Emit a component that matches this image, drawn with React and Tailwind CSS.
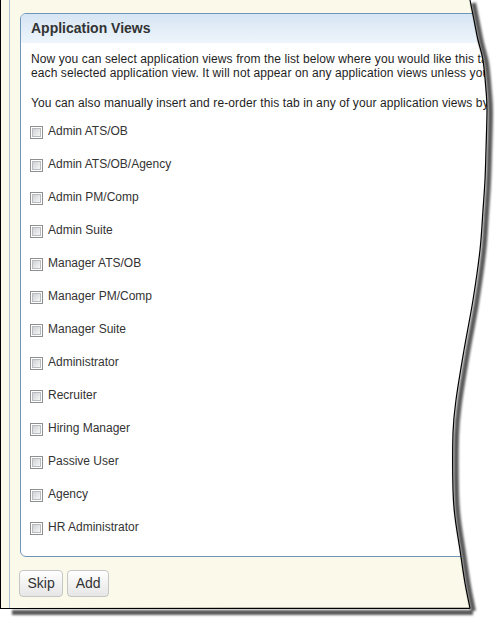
import React from "react";

const views = [
  "Admin ATS/OB",
  "Admin ATS/OB/Agency",
  "Admin PM/Comp",
  "Admin Suite",
  "Manager ATS/OB",
  "Manager PM/Comp",
  "Manager Suite",
  "Administrator",
  "Recruiter",
  "Hiring Manager",
  "Passive User",
  "Agency",
  "HR Administrator",
];

// torn right edge of the screenshot
const edge = [
  [470, 0], [472, 10], [474, 20], [478, 40], [483, 60], [486, 90], [487, 110],
  [486, 150], [485, 180], [483, 210], [480, 250], [473, 300], [464, 350],
  [456, 400], [453, 433], [453, 490], [455, 517], [460, 550], [465, 583], [470, 608],
];

const curve = (p) => {
  let d = "";
  for (let i = 0; i < p.length - 1; i++) {
    const p0 = p[i - 1] || p[i];
    const p1 = p[i];
    const p2 = p[i + 1];
    const p3 = p[i + 2] || p2;
    const c1 = [p1[0] + (p2[0] - p0[0]) / 6, p1[1] + (p2[1] - p0[1]) / 6];
    const c2 = [p2[0] - (p3[0] - p1[0]) / 6, p2[1] - (p3[1] - p1[1]) / 6];
    d += ` C${c1} ${c2} ${p2}`;
  }
  return d;
};

const shifted = edge.map(([x, y]) => [x + 3.5, y + 3]);

const TornEdge = () => (
  <svg
    className="absolute inset-0 pointer-events-none"
    width="504"
    height="626"
    viewBox="0 0 504 626"
  >
    <defs>
      <filter id="blur" x="-10%" y="-10%" width="120%" height="120%">
        <feGaussianBlur stdDeviation="1" />
      </filter>
    </defs>
    <path
      d={`M504,-2 L470,-2 L470,0${curve(edge)} L470,626 L504,626 Z`}
      fill="#ffffff"
    />
    <path
      d={`M12,612.5 L473,612.5 M473.5,3${curve(shifted)}`}
      fill="none"
      stroke="#5a5a5a"
      strokeWidth="5"
      filter="url(#blur)"
    />
    <path
      d={`M470,0${curve(edge)} L0,608.5`}
      fill="none"
      stroke="#000"
      strokeWidth="1.2"
    />
  </svg>
);

const Checkbox = () => (
  <span className="mt-[10px] w-[13px] h-[13px] shrink-0 border border-[#8e8f8f] bg-white p-px">
    <span className="block w-full h-full border border-[#b8bcc0] bg-gradient-to-br from-[#cfd1d4] to-[#f7f7f7]" />
  </span>
);

export default function App() {
  return (
    <div className="relative w-[504px] h-[626px] overflow-hidden bg-white font-['Liberation_Sans',Arial,sans-serif]">
      <div className="w-[760px] h-[609px] border-l border-b border-black bg-[#fbfaea] flex">
        <div className="ml-[8px] border-l border-[#aebfce] flex-1 pt-[13px] pl-[10px]">
          <div className="border border-[#6f96ba] rounded-[6px] bg-white overflow-hidden">
            <div className="h-[29px] flex items-center pl-[10px] bg-gradient-to-b from-[#d6e5f3] to-[#eef5fb]">
              <span className="text-[14px] font-bold text-[#333]">Application Views</span>
            </div>
            <div className="pt-[9px] pl-[10px] pb-[11px]">
              <p className="text-[12px] leading-[14px] tracking-[0.1px] text-[#1e1e1e] whitespace-nowrap mb-[16px]">
                Now you can select application views from the list below where you would like this tab to be added. It will be added as the last tab in
                <br />
                each selected application view. It will not appear on any application views unless you select them here.
              </p>
              <p className="text-[12px] leading-[14px] tracking-[0.1px] text-[#1e1e1e] whitespace-nowrap">
                You can also manually insert and re-order this tab in any of your application views by editing the application view.
              </p>
              <div className="mt-[6px] -ml-px flex flex-col">
                {views.map((v) => (
                  <label key={v} className="h-[33px] flex items-start gap-[5px]">
                    <Checkbox />
                    <span className="mt-[8px] text-[12px] leading-[14px] text-[#333]">{v}</span>
                  </label>
                ))}
              </div>
            </div>
          </div>
          <div className="mt-[13px] -ml-px flex gap-[4px]">
            <button className="h-[27px] px-[7.5px] border border-[#c6c6c6] rounded-[4px] bg-gradient-to-b from-white to-[#e6e6e6] text-[14px] text-[#333]">
              Skip
            </button>
            <button className="h-[27px] px-[7.5px] border border-[#c6c6c6] rounded-[4px] bg-gradient-to-b from-white to-[#e6e6e6] text-[14px] text-[#333]">
              Add
            </button>
          </div>
        </div>
      </div>
      <TornEdge />
    </div>
  );
}
